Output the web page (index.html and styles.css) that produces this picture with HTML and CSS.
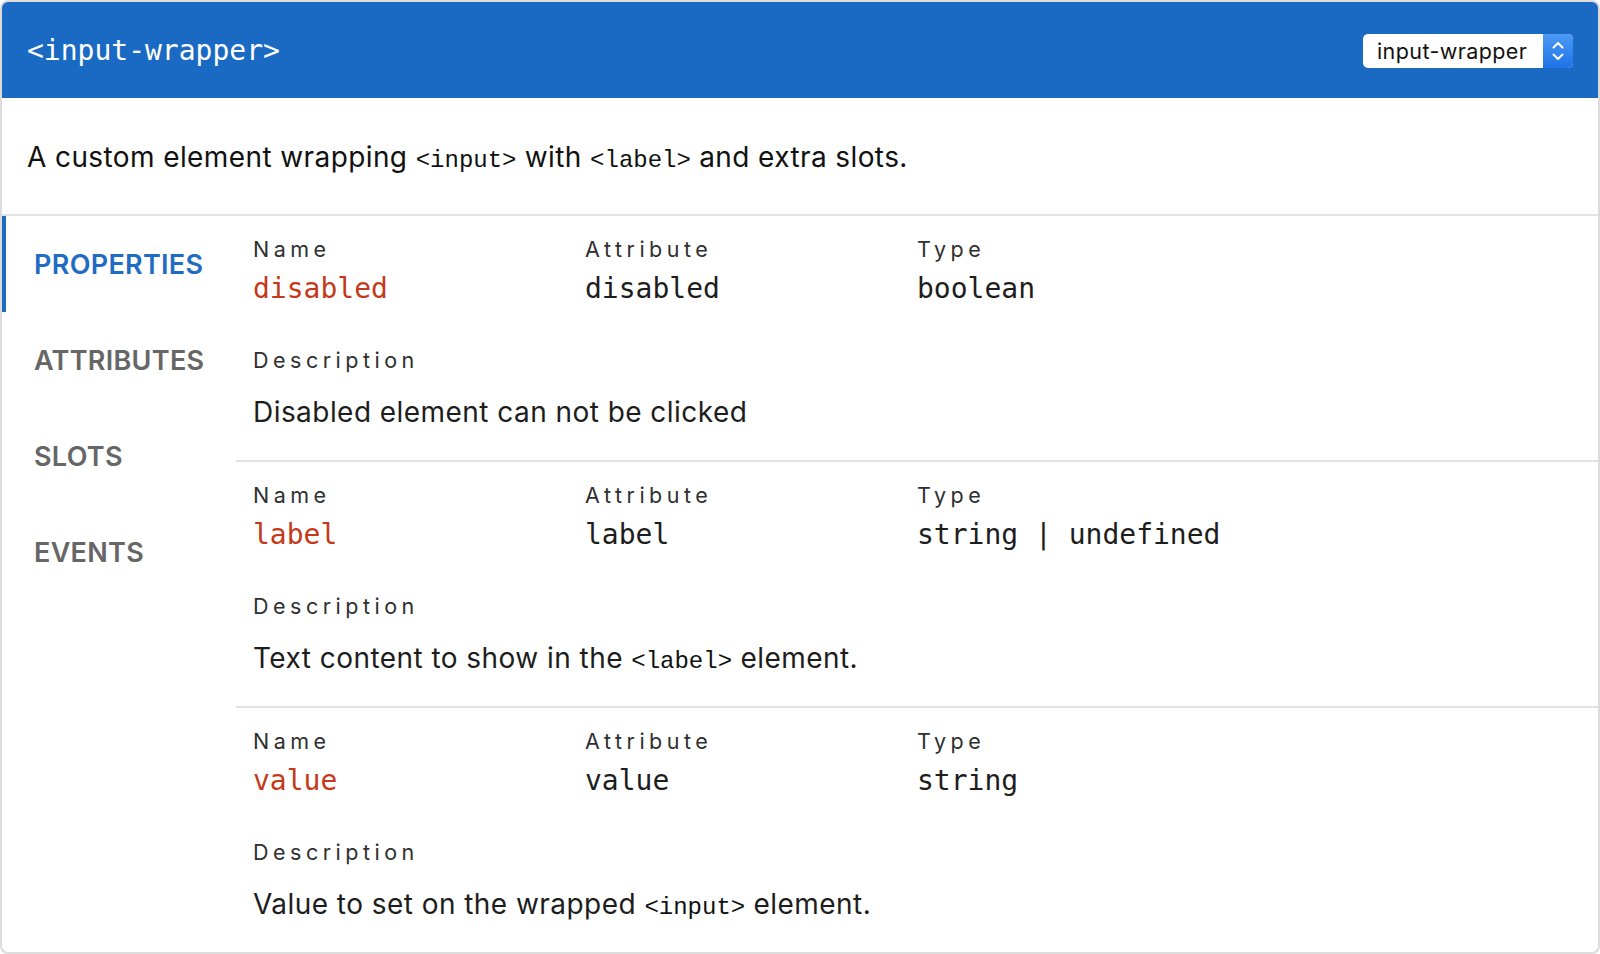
FILE: index.html
```html
<!DOCTYPE html>
<html>
<head>
<meta charset="utf-8">
<link rel="stylesheet" href="styles.css">
</head>
<body>
<div class="card">
  <header class="header">
    <h1 class="title">&lt;input-wrapper&gt;</h1>
    <div class="select">
      <span class="select-text">input-wrapper</span>
      <span class="stepper">
        <svg width="14" height="24" viewBox="0 0 14 24"><path d="M2.5 8.5 L7 4 L11.5 8.5" fill="none" stroke="#fff" stroke-width="2" stroke-linecap="round" stroke-linejoin="round"/><path d="M2.5 15.5 L7 20 L11.5 15.5" fill="none" stroke="#fff" stroke-width="2" stroke-linecap="round" stroke-linejoin="round"/></svg>
      </span>
    </div>
  </header>
  <p class="intro">A custom element wrapping <code>&lt;input&gt;</code> with <code>&lt;label&gt;</code> and extra slots.</p>
  <div class="main">
    <nav class="nav">
      <div class="nav-item active">PROPERTIES</div>
      <div class="nav-item">ATTRIBUTES</div>
      <div class="nav-item">SLOTS</div>
      <div class="nav-item">EVENTS</div>
    </nav>
    <div class="rows">
      <section class="row">
        <div class="cols">
          <div class="col"><div class="label">Name</div><div class="value name">disabled</div></div>
          <div class="col"><div class="label">Attribute</div><div class="value">disabled</div></div>
          <div class="col"><div class="label">Type</div><div class="value">boolean</div></div>
        </div>
        <div class="label desc-label">Description</div>
        <div class="desc">Disabled element can not be clicked</div>
      </section>
      <section class="row">
        <div class="cols">
          <div class="col"><div class="label">Name</div><div class="value name">label</div></div>
          <div class="col"><div class="label">Attribute</div><div class="value">label</div></div>
          <div class="col"><div class="label">Type</div><div class="value">string | undefined</div></div>
        </div>
        <div class="label desc-label">Description</div>
        <div class="desc">Text content to show in the <code>&lt;label&gt;</code> element.</div>
      </section>
      <section class="row last">
        <div class="cols">
          <div class="col"><div class="label">Name</div><div class="value name">value</div></div>
          <div class="col"><div class="label">Attribute</div><div class="value">value</div></div>
          <div class="col"><div class="label">Type</div><div class="value">string</div></div>
        </div>
        <div class="label desc-label">Description</div>
        <div class="desc">Value to set on the wrapped <code>&lt;input&gt;</code> element.</div>
      </section>
    </div>
  </div>
</div>
</body>
</html>
```

FILE: styles.css
```css
* { box-sizing: border-box; }
html, body { margin: 0; padding: 0; background: #fff; }
body { font-family: Inter, "Noto Sans", sans-serif; color: #1d1d1d; }

.card {
  width: 1600px;
  height: 954px;
  border: 2px solid #dcdcdc;
  border-radius: 8px;
  overflow: hidden;
  background: #fff;
}

.header {
  height: 96px;
  background: #1a6ac4;
  display: flex;
  align-items: center;
  justify-content: space-between;
  padding: 0 25px 0 25px;
}
.title {
  margin: 0;
  font-family: "DejaVu Sans Mono", monospace;
  font-weight: normal;
  font-size: 28px;
  color: #fff;
  letter-spacing: 0;
}
.select {
  display: flex;
  height: 34px;
  width: 210px;
  background: #fff;
  border-radius: 5px;
  overflow: hidden;
  margin-top: 2px;
}
.select-text {
  flex: 1;
  display: flex;
  align-items: center;
  padding-left: 14px;
  font-size: 21.5px;
  letter-spacing: 0.4px;
  color: #111;
}
.stepper {
  width: 30px;
  background: linear-gradient(#4a9af5, #1f72e8);
  display: flex;
  align-items: center;
  justify-content: center;
}

.intro {
  margin: 0;
  height: 118px;
  padding: 41px 25px 0 25px;
  font-size: 28px;
  line-height: 36px;
  letter-spacing: 0.4px;
  color: #111;
  border-bottom: 2px solid #e2e2e2;
}
code {
  font-family: "Liberation Mono", "Courier New", monospace;
  font-size: 24px;
  line-height: 1;
  letter-spacing: 0;
  color: #111;
}

.main {
  display: flex;
}
.nav {
  width: 234px;
  flex: none;
  display: flex;
  flex-direction: column;
}
.nav-item {
  height: 96px;
  display: flex;
  align-items: center;
  padding-left: 28px;
  border-left: 4px solid transparent;
  font-size: 27px;
  font-weight: 600;
  letter-spacing: 0.3px;
  color: #666;
}
.nav-item.active {
  color: #1f6cc2;
  border-left-color: #1f6cc2;
}

.rows {
  flex: 1;
}
.row {
  padding: 20px 0 28px 17px;
  border-bottom: 2px solid #e2e2e2;
}
.row.last { border-bottom: none; }
.cols {
  display: flex;
}
.col {
  width: 332px;
}
.label {
  font-size: 21.5px;
  line-height: 26px;
  letter-spacing: 4.5px;
  color: #2f2f2f;
}
.value {
  font-family: "DejaVu Sans Mono", monospace;
  font-size: 28px;
  line-height: 54px;
  color: #1d1d1d;
}
.value.name { color: #c4391a; }
.desc-label { margin-top: 31px; }
.desc {
  margin-top: 19px;
  font-size: 28px;
  line-height: 40px;
  letter-spacing: 0.45px;
  color: #1d1d1d;
}
```
